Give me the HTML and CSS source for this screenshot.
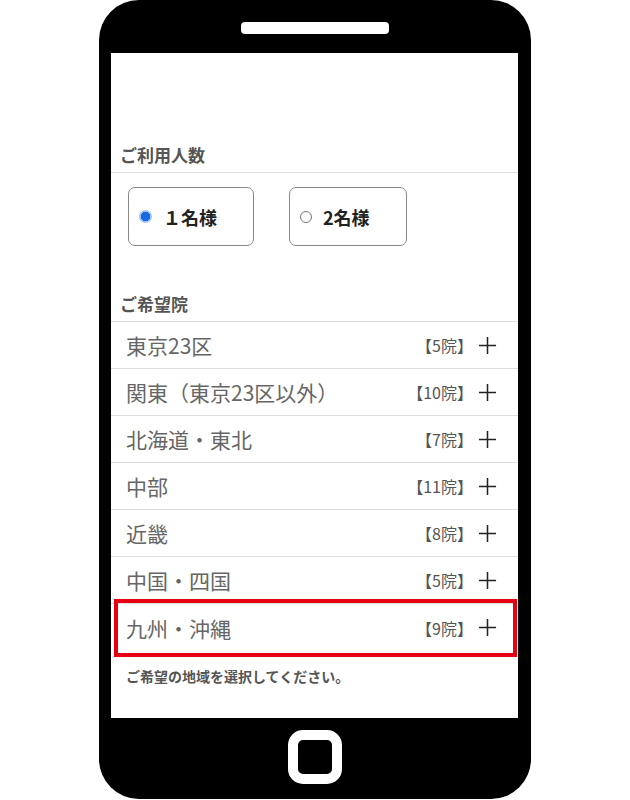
FILE: index.html
```html
<!DOCTYPE html>
<html lang="ja">
  <head>
    <meta charset="UTF-8" />
    <meta name="viewport" content="width=device-width, initial-scale=1.0" />
    <title>ご予約</title>
    <link rel="stylesheet" href="styles.css">
  </head>
  <body>
    <div class="phone">
      <div class="speaker"></div>
      <div class="screen">
        <h2 class="field-title">ご利用人数</h2>
        <div class="people">
          <label class="people-option people-option-one">
            <input type="radio" name="people" checked />
            <span>１名様</span>
          </label>
          <label class="people-option people-option-two">
            <input type="radio" name="people" />
            <span>2名様</span>
          </label>
        </div>

        <h2 class="field-title">ご希望院</h2>
        <ul class="area-list">
          <li class="area-row">
            <span class="area-name">東京23区</span>
            <span class="area-count">【5院】</span>
            <svg class="area-plus" viewBox="0 0 20 20"><path d="M10 1v18M1 10h18" /></svg>
          </li>
          <li class="area-row">
            <span class="area-name">関東（東京23区以外）</span>
            <span class="area-count">【10院】</span>
            <svg class="area-plus" viewBox="0 0 20 20"><path d="M10 1v18M1 10h18" /></svg>
          </li>
          <li class="area-row">
            <span class="area-name">北海道・東北</span>
            <span class="area-count">【7院】</span>
            <svg class="area-plus" viewBox="0 0 20 20"><path d="M10 1v18M1 10h18" /></svg>
          </li>
          <li class="area-row">
            <span class="area-name">中部</span>
            <span class="area-count">【11院】</span>
            <svg class="area-plus" viewBox="0 0 20 20"><path d="M10 1v18M1 10h18" /></svg>
          </li>
          <li class="area-row">
            <span class="area-name">近畿</span>
            <span class="area-count">【8院】</span>
            <svg class="area-plus" viewBox="0 0 20 20"><path d="M10 1v18M1 10h18" /></svg>
          </li>
          <li class="area-row">
            <span class="area-name">中国・四国</span>
            <span class="area-count">【5院】</span>
            <svg class="area-plus" viewBox="0 0 20 20"><path d="M10 1v18M1 10h18" /></svg>
          </li>
          <li class="area-row is-marked">
            <span class="area-name">九州・沖縄</span>
            <span class="area-count">【9院】</span>
            <svg class="area-plus" viewBox="0 0 20 20"><path d="M10 1v18M1 10h18" /></svg>
          </li>
        </ul>
        <p class="field-note">ご希望の地域を選択してください。</p>
      </div>
      <div class="home-button"></div>
    </div>
  </body>
</html>
```

FILE: styles.css
```css
body {
  margin: 0;
  background: #fff;
  font-family: "Noto Sans CJK JP", "Noto Sans", sans-serif;
}
.phone {
  width: 432px;
  height: 799px;
  margin-left: 99px;
  box-sizing: border-box;
  padding: 22px 13px 0 12px;
  background: #000;
  border-radius: 40px;
  display: flex;
  flex-direction: column;
  align-items: center;
}
.speaker {
  width: 148px;
  height: 12px;
  margin-bottom: 19px;
  background: #fff;
  border-radius: 4px;
}
.screen {
  align-self: stretch;
  height: 665px;
  box-sizing: border-box;
  padding-top: 90px;
  background: #fff;
}
.home-button {
  width: 54px;
  height: 54px;
  margin-top: 12px;
  box-sizing: border-box;
  border: 10px solid #fff;
  border-radius: 15px;
}
.field-title {
  margin: 0;
  padding: 0 0 5px 9px;
  font-size: 17px;
  line-height: 24px;
  font-weight: bold;
  color: #555;
  border-bottom: 1px solid #ddd;
}
.people {
  display: flex;
  gap: 35px;
  padding: 14px 0 0 17px;
  margin-bottom: 46px;
}
.people-option {
  display: flex;
  align-items: center;
  height: 59px;
  box-sizing: border-box;
  padding-left: 10px;
  border: 1px solid #888;
  border-radius: 7px;
  font-size: 18px;
  font-weight: bold;
  color: #222;
}
.people-option-one {
  width: 126px;
}
.people-option-two {
  width: 118px;
}
.people-option input {
  appearance: none;
  width: 12px;
  height: 12px;
  margin: 0 11px 0 0;
  border: 1px solid #777;
  border-radius: 50%;
  background: #fff;
}
.people-option input:checked {
  width: 13px;
  height: 13px;
  border: none;
  background: radial-gradient(circle, #1769e0 0 4.5px, #9fc2f7 5px);
}
.area-list {
  list-style: none;
  margin: 0;
  padding: 0;
}
.area-row {
  display: flex;
  align-items: center;
  height: 47px;
  box-sizing: border-box;
  padding: 0 21px 0 15px;
  border-bottom: 1px solid #ddd;
}
.area-row.is-marked {
  position: relative;
  border-bottom: none;
}
.area-row.is-marked::after {
  content: "";
  position: absolute;
  top: -5px;
  bottom: -6px;
  left: 3px;
  right: 1px;
  border: 4px solid #e60012;
}
.area-name {
  flex: 1;
  font-size: 21px;
  color: #666;
}
.area-count {
  font-size: 16px;
  color: #555;
}
.area-plus {
  width: 19px;
  height: 19px;
  margin-left: 5px;
  stroke: #222;
  stroke-width: 1.6;
}
.field-note {
  margin: 15px 0 0 15px;
  font-size: 14px;
  line-height: 20px;
  font-weight: bold;
  color: #555;
}
```
